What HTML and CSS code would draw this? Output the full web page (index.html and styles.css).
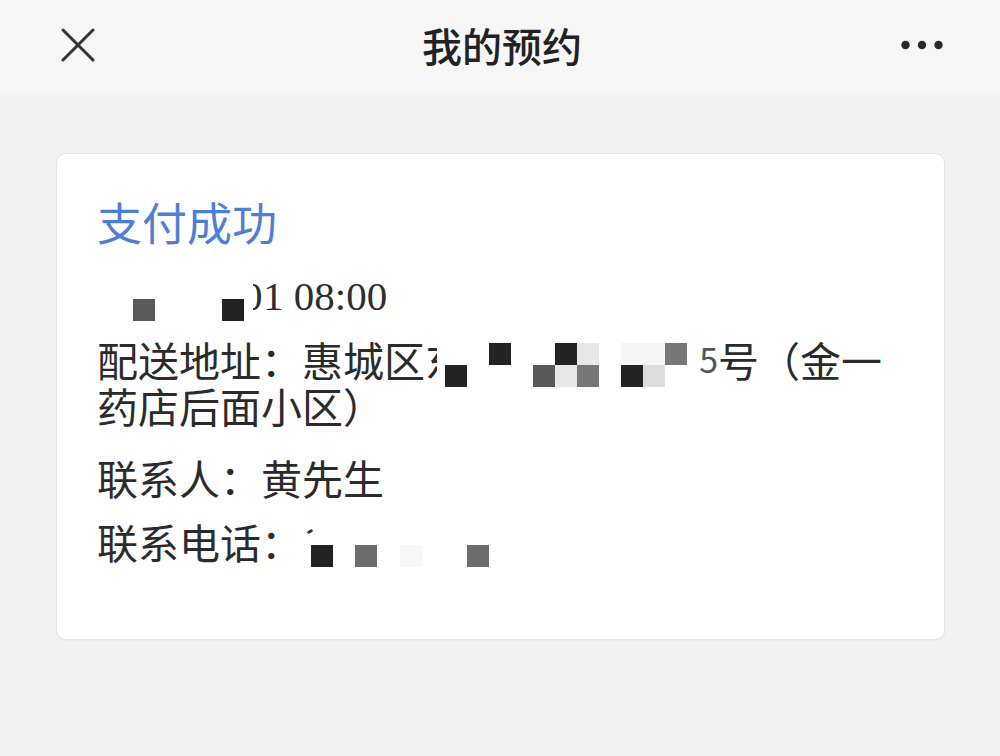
FILE: index.html
```html
<!DOCTYPE html>
<html lang="zh-CN">
<head>
<meta charset="utf-8">
<title>我的预约</title>
<link rel="stylesheet" href="styles.css">
</head>
<body>
<header class="topbar">
  <div class="close">
    <svg width="34" height="34" viewBox="0 0 34 34"><path d="M2 2 L32 32 M32 2 L2 32" stroke="#333" stroke-width="3" stroke-linecap="round" fill="none"/></svg>
  </div>
  <h1 class="title">我的预约</h1>
  <div class="more">
    <svg width="44" height="10" viewBox="0 0 44 10"><circle cx="4.5" cy="5" r="4.2" fill="#2a2a2a"/><circle cx="21" cy="5" r="4.2" fill="#2a2a2a"/><circle cx="37.5" cy="5" r="4.2" fill="#2a2a2a"/></svg>
  </div>
</header>
<main class="card">
  <h2 class="status">支付成功</h2>
  <p class="time"><span class="sq sq-gray first"></span><span class="sq sq-black second"></span><span class="clip0">0</span>1 08:00</p>
  <p class="row addr">配送地址：惠城区<span class="clipch">东</span><span class="mosaic"><span class="grid">
      <i></i><i></i><i class="k"></i><i></i><i></i><i class="k"></i><i class="l"></i><i></i><i class="f"></i><i class="f"></i><i class="g"></i>
      <i class="k"></i><i></i><i></i><i></i><i class="d"></i><i class="l"></i><i class="g"></i><i></i><i class="k"></i><i class="l2"></i><i></i>
    </span></span><span class="clip5">5</span>号（金一<br>药店后面小区）</p>
  <p class="row contact">联系人：黄先生</p>
  <p class="row phone">联系电话：<span class="phonemask"><span class="tick"></span><span class="sq sq-black"></span><span class="sq sq-mid p2"></span><span class="sq sq-faint p3"></span><span class="sq sq-mid p4"></span></span></p>
</main>
</body>
</html>
```
FILE: styles.css
```css
html, body {
  margin: 0;
  padding: 0;
}
body {
  background: #f2f2f3;
  font-family: "Noto Sans CJK SC", "Noto Sans", sans-serif;
  color: #2b2b2b;
  width: 1000px;
  height: 756px;
  overflow: hidden;
}
.topbar {
  height: 95px;
  box-sizing: border-box;
  padding: 0 55px 6px 61px;
  background: #f6f6f6;
  display: grid;
  grid-template-columns: 1fr auto 1fr;
  align-items: center;
}
.close {
  display: flex;
  align-items: center;
}
.close svg { display: block; }
.title {
  margin: 0;
  font-size: 40px;
  font-weight: 500;
  line-height: 50px;
  color: #222;
  letter-spacing: 0;
  padding-right: 2px;
}
.more {
  display: flex;
  justify-content: flex-end;
  align-items: center;
}
.more svg { display: block; }

.card {
  margin: 58px 0 0 56px;
  width: 889px;
  height: 487px;
  box-sizing: border-box;
  background: #fff;
  border: 1px solid #e3e3e3;
  border-radius: 10px;
  box-shadow: 0 1px 2px rgba(0,0,0,0.04);
  padding: 41px 20px 0 40px;
}
.status {
  margin: 0;
  font-size: 45px;
  line-height: 54px;
  font-weight: 400;
  color: #4d7fd3;
}
.time {
  margin: 24px 0 0;
  font-family: "Liberation Serif", serif;
  font-size: 41px;
  line-height: 46px;
  height: 46px;
  color: #2e2e2e;
  white-space: nowrap;
}
.sq {
  display: inline-block;
  width: 22px;
  height: 22px;
  vertical-align: -11px;
}
.sq-gray { background: #5a5a5a; }
.sq-black { background: #222; }
.sq-mid { background: #6c6c6c; }
.sq-faint { background: #f7f7f7; }
.first { margin-left: 36px; }
.second { margin-left: 67px; }
.clip0 {
  display: inline-block;
  width: 10px;
  overflow: hidden;
  vertical-align: top;
  height: 46px;
  text-indent: -11px;
  margin-left: 9px;
}
.row {
  margin: 0;
  font-size: 41px;
  line-height: 46px;
  white-space: nowrap;
}
.addr { margin-top: 17px; }
.contact { margin-top: 26px; }
.phone { margin-top: 18px; }

.clipch {
  display: inline-block;
  width: 12px;
  height: 46px;
  overflow: hidden;
  vertical-align: top;
}
.mosaic {
  display: inline-block;
  height: 46px;
  vertical-align: top;
  margin-left: 8px;
}
.grid {
  display: grid;
  grid-template-columns: repeat(11, 22px);
  grid-template-rows: 22px 22px;
  padding-top: 7px;
}
.grid i { display: block; }
.grid .k { background: #232323; }
.grid .d { background: #585858; }
.grid .g { background: #777; }
.grid .l { background: #e7e7e7; }
.grid .l2 { background: #dcdcdc; }
.grid .f { background: #f5f5f5; }
.clip5 {
  display: inline-block;
  width: 31px;
  height: 46px;
  overflow: hidden;
  vertical-align: top;
  text-align: right;
  color: #555;
  font-size: 34px;
}
.phonemask {
  position: relative;
  display: inline-flex;
  vertical-align: -8px;
  height: 22px;
  margin-left: 9px;
}
.phonemask .sq { vertical-align: top; }
.p2 { margin-left: 22px; }
.p3 { margin-left: 23px; }
.p4 { margin-left: 45px; }
.tick {
  position: absolute;
  left: -4px;
  top: -15px;
  width: 6px;
  height: 3px;
  background: #333;
  border-radius: 2px;
  transform: rotate(-30deg);
}
```
